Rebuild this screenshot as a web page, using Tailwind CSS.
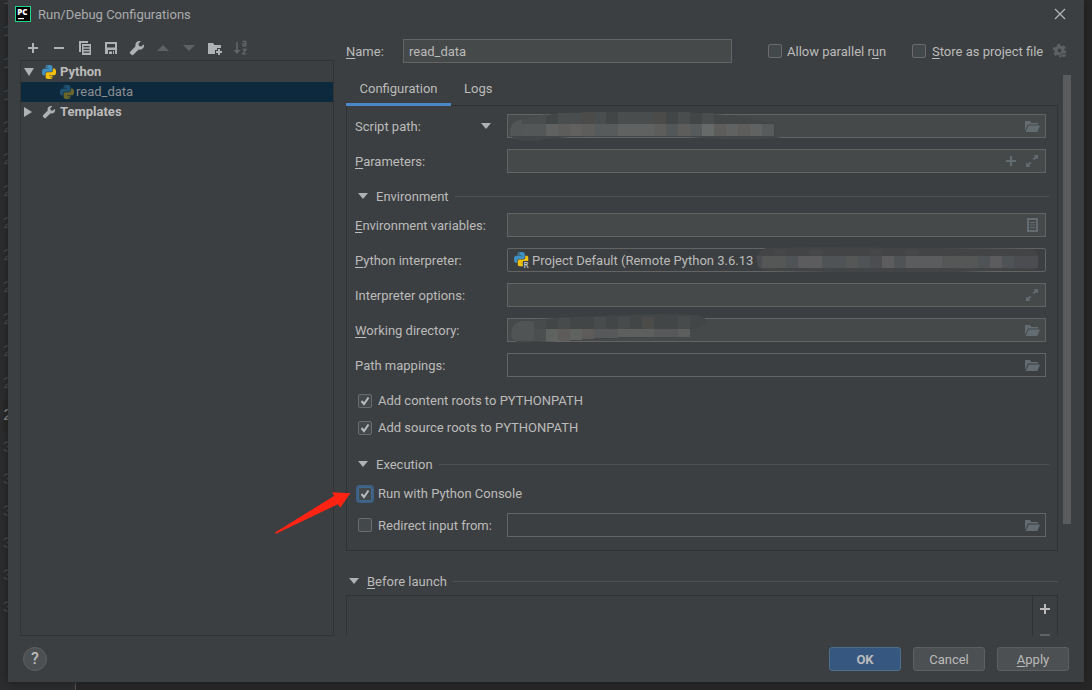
<!DOCTYPE html>
<html lang="en">
<head>
<meta charset="utf-8">
<meta name="viewport" content="width=device-width, initial-scale=1">
<title>Run/Debug Configurations</title>
<script src="https://cdn.jsdelivr.net/npm/@tailwindcss/browser@4"></script>
</head>
<body class="relative flex min-h-screen flex-col overflow-hidden bg-[#272727] font-[Roboto,'Open_Sans',sans-serif] text-[13px] leading-5 text-[#bbbbbb]">

<!-- Shared icons -->
<svg class="hidden" aria-hidden="true">
  <symbol id="python" viewBox="0 0 24 24">
    <path fill="#3f8fc0" d="M14.25.18l.9.2.73.26.59.3.45.32.34.34.25.34.16.33.1.3.04.26.02.2-.01.13V8.5l-.05.63-.13.55-.21.46-.26.38-.3.31-.33.25-.35.19-.35.14-.33.1-.3.07-.26.04-.21.02H8.77l-.69.05-.59.14-.5.22-.41.27-.33.32-.27.35-.2.36-.15.37-.1.35-.07.32-.04.27-.02.21v3.06H3.17l-.21-.03-.28-.07-.32-.12-.35-.18-.36-.26-.36-.36-.35-.46-.32-.59-.28-.73-.21-.88-.14-1.05-.05-1.23.06-1.22.16-1.04.24-.87.32-.71.36-.57.4-.44.42-.33.42-.24.4-.16.36-.1.32-.05.24-.01h.16l.06.01h8.16v-.83H6.18l-.01-2.75-.02-.37.05-.34.11-.31.17-.28.25-.26.31-.23.38-.2.44-.18.51-.15.58-.12.64-.1.71-.06.77-.04.84-.02 1.27.05zm-6.3 1.98l-.23.33-.08.41.08.41.23.34.33.22.41.09.41-.09.33-.22.23-.34.08-.41-.08-.41-.23-.33-.33-.22-.41-.09-.41.09z"/>
    <path fill="#f2c10f" d="M21.1 6.11l.28.06.32.12.35.18.36.27.36.35.35.47.32.59.28.73.21.88.14 1.04.05 1.23-.06 1.23-.16 1.04-.24.86-.32.71-.36.57-.4.45-.42.33-.42.24-.4.16-.36.09-.32.05-.24.02-.16-.01h-8.22v.82h5.84l.01 2.76.02.36-.05.34-.11.31-.17.29-.25.25-.31.24-.38.2-.44.17-.51.15-.58.13-.64.09-.71.07-.77.04-.84.01-1.27-.04-1.07-.14-.9-.2-.73-.25-.59-.3-.45-.33-.34-.34-.25-.34-.16-.33-.1-.3-.04-.25-.02-.2.01-.13v-5.34l.05-.64.13-.54.21-.46.26-.38.3-.32.33-.24.35-.2.35-.14.33-.1.3-.06.26-.04.21-.02.13-.01h5.84l.69-.05.59-.14.5-.21.41-.28.33-.32.27-.35.2-.36.15-.36.1-.35.07-.32.04-.28.02-.21V6.07h2.09l.14.01zm-6.47 14.25l-.23.33-.08.41.08.41.23.33.33.23.41.08.41-.08.33-.23.23-.33.08-.41-.08-.41-.23-.33-.33-.23-.41-.08-.41.08z"/>
  </symbol>
  <symbol id="wrench" viewBox="0 0 16 16">
    <path fill="#afb1b3" d="M14.7 4.2 12.3 6.600 10 6 9.400 3.700 11.800 1.300C10.300.700 8.600 1.100 7.500 2.200 6.400 3.300 6.100 4.900 6.600 6.300L1.200 11.700C.7 12.200.7 13 1.200 13.500L2.500 14.800C3 15.300 3.800 15.300 4.300 14.800L9.700 9.400C11.100 9.900 12.700 9.600 13.800 8.500 14.900 7.400 15.300 5.700 14.700 4.200Z"/>
  </symbol>
  <symbol id="plus" viewBox="0 0 16 16"><path d="M7 3h2v4h4v2H9v4H7V9H3V7h4z" fill="currentColor"/></symbol>
  <symbol id="folder" viewBox="0 0 16 16">
    <path fill="#636c71" d="M1 3h5l1.500 2H14v1.500H4L1.500 12H1z"/>
    <path fill="#636c71" d="M4.600 7.500H16L13.300 14H1.600z"/>
  </symbol>
  <symbol id="expand" viewBox="0 0 16 16">
    <path fill="#636c71" d="M9.500 2H14v4.500L12.500 5 10.200 7.300 8.700 5.800 11 3.500zM2 9.500 3.500 11 5.800 8.700 7.300 10.200 5 12.500 6.500 14H2z"/>
  </symbol>
  <symbol id="caret" viewBox="0 0 10 6"><path d="M0 0h10L5 6z" fill="#afb1b3"/></symbol>
  <symbol id="tick" viewBox="0 0 14 14"><path d="M3.500 7 6 10 10.500 3.500" fill="none" stroke="#b9bbbd" stroke-width="2"/></symbol>
</svg>

<!-- Editor behind the dialog -->
<div class="absolute inset-0 flex" aria-hidden="true">
  <div class="w-[76px] overflow-hidden border-r border-[#555555] bg-[#2b2d2e]">
    <ol class="-mt-4 pl-[3px] font-['Liberation_Mono',monospace] text-base leading-8 text-[#505355]">
      <li>16</li><li>17</li><li>18</li><li>19</li><li>20</li><li>21</li><li>22</li><li>23</li><li>24</li><li>25</li><li>26</li><li>27</li><li>28</li><li class="bg-[#292929] text-[#a4a3a3]">29</li><li>30</li><li>31</li><li>32</li><li>33</li><li>34</li><li>35</li>
    </ol>
  </div>
</div>

<!-- Dialog -->
<main class="relative mx-2 mb-2 flex flex-1 flex-col bg-[#3c3f41] shadow-[0_0_8px_#1c1c1c]">
  <header class="flex h-7 items-center pr-[18px] pl-[7px]">
    <svg class="size-4" viewBox="0 0 16 16" role="img" aria-label="PyCharm">
      <rect x=".5" y=".5" width="15" height="15" fill="#000" stroke="#21d789"/>
      <text x="2.200" y="9" font-family="Open Sans, sans-serif" font-weight="800" font-size="8" fill="#fff">PC</text>
      <path d="M3 12h6v1.200H3z" fill="#fff"/>
    </svg>
    <h1 class="ml-[7px] flex-1 leading-[21px] text-[#a9abad]">Run/Debug Configurations</h1>
    <button type="button" aria-label="Close" class="size-3"><svg class="size-3" viewBox="0 0 12 12"><path d="M1 1l10 10M11 1 1 11" stroke="#b4b6b8" stroke-width="1.200"/></svg></button>
  </header>

  <div class="flex flex-1">
    <!-- Configuration tree -->
    <aside class="ml-3 flex w-[314px] flex-col pt-2">
      <div class="flex h-6 items-center gap-[10px] pl-[5px] text-[#afb1b3]">
        <button type="button" aria-label="Add" class="size-4"><svg class="size-4"><use href="#plus"/></svg></button>
        <button type="button" aria-label="Remove" class="size-4"><svg class="size-4" viewBox="0 0 16 16"><path d="M3 7h10v2H3z" fill="currentColor"/></svg></button>
        <button type="button" aria-label="Copy" class="size-4"><svg class="size-4" viewBox="0 0 16 16" fill="currentColor"><path d="M2 1h9v2H4v9H2z"/><path fill-rule="evenodd" d="M5 4h9v11H5zM6.500 6v1.200h6V6zM6.500 8.800V10h6V8.800zM6.500 11.500v1.200h6v-1.200z"/></svg></button>
        <button type="button" aria-label="Save" class="size-4"><svg class="size-4" viewBox="0 0 16 16" fill="currentColor"><path fill-rule="evenodd" d="M2 2h12v12h-2v-4H5v4H2zM4 4v3.500h8V4z"/><path d="M6 11.500h3V14H6zM10 11h1v3h-1z"/></svg></button>
        <button type="button" aria-label="Edit templates" class="size-4"><svg class="size-4"><use href="#wrench"/></svg></button>
        <button type="button" aria-label="Move up" class="size-4" disabled><svg class="size-4" viewBox="0 0 16 16"><path d="M2 11h12L8 5z" fill="#5f6162"/></svg></button>
        <button type="button" aria-label="Move down" class="size-4" disabled><svg class="size-4" viewBox="0 0 16 16"><path d="M2 5h12l-6 6z" fill="#5f6162"/></svg></button>
        <button type="button" aria-label="New folder" class="size-4"><svg class="size-4" viewBox="0 0 16 16" fill="currentColor"><path d="M1 3h5l1.500 2H14v3h-4v2H8v4H1z"/><path d="M11 9h2v2h2v2h-2v2h-2v-2H9v-2h2z"/></svg></button>
        <button type="button" aria-label="Sort" class="size-4" disabled><svg class="size-4" viewBox="0 0 16 16" fill="none" stroke="#636567" stroke-width="1.500"><path d="M4 2v9"/><path d="M.5 10h7L4 14z" fill="#636567" stroke="none"/><path d="M9.500 1.500h3.300V6.500M12.500 3.800H10V5.900h2.500M9.500 9.500h3.500L9.700 13.800h3.700" stroke-width="1.300"/></svg></button>
      </div>
      <ul class="flex-1 border border-[#323232] pt-px" role="tree" aria-label="Configurations">
        <li class="flex h-5 items-center pl-[3px] font-bold" role="treeitem">
          <svg class="h-2 w-[10px]" viewBox="0 0 10 8"><path d="M0 0h10L5 8z" fill="#afb1b3"/></svg>
          <svg class="mr-1 ml-2 size-[14px]"><use href="#python"/></svg>Python
        </li>
        <li class="flex h-5 items-center bg-[#0d293e] pl-[39px] text-[#8c8e90]" role="treeitem" aria-selected="true">
          <svg class="mr-[2px] size-[14px] opacity-40"><use href="#python"/></svg>read_data
        </li>
        <li class="flex h-5 items-center pl-[3px] font-bold" role="treeitem">
          <svg class="h-[10px] w-[10px]" viewBox="0 0 10 10"><path d="M0 0l8 5-8 5z" fill="#afb1b3"/></svg>
          <svg class="mr-1 ml-2 size-[14px]"><use href="#wrench"/></svg>Templates
        </li>
      </ul>
    </aside>

    <!-- Configuration editor -->
    <section class="ml-3 flex flex-1 flex-col pt-[11px] pr-[13px] leading-[21px]">
      <div class="flex h-6 items-center">
        <label for="name" class="w-[57px]"><u class="underline-offset-2">N</u>ame:</label>
        <input id="name" value="read_data" class="h-6 w-[329px] border border-[#646464] bg-[#45494a] px-[5px] outline-none">
        <span class="flex flex-1 items-center justify-end pr-[3px]">
          <input id="parallel" type="checkbox" class="mr-[5px] size-[14px] appearance-none rounded-xs border border-[#6b6b6b] bg-[#43494a]">
          <label for="parallel" class="w-[125px]">Allow parallel r<u class="underline-offset-2">u</u>n</label>
          <input id="store" type="checkbox" class="mr-[6px] size-[14px] appearance-none rounded-xs border border-[#6b6b6b] bg-[#43494a]">
          <label for="store" class="w-[120px]"><u class="underline-offset-2">S</u>tore as project file</label>
          <button type="button" aria-label="Storage options" class="size-4"><svg class="size-4" viewBox="0 0 16 16"><circle cx="7.500" cy="7.500" r="3.500" fill="none" stroke="#5f6264" stroke-width="3"/><circle cx="7.500" cy="7.500" r="5.700" fill="none" stroke="#5f6264" stroke-width="2" stroke-dasharray="3 2.970"/><path d="M8.500 11h7l-3.500 4z" fill="#5f6264" stroke="#3c3f41" stroke-width=".7"/></svg></button>
        </span>
      </div>

      <div class="flex flex-1">
        <div class="flex flex-1 flex-col">
          <div class="relative z-10 mt-[10px] -mb-px flex h-[33px]" role="tablist">
            <button type="button" role="tab" aria-selected="true" class="w-[105px] border-b-3 border-[#4a88c7]">Configuration</button>
            <button type="button" role="tab" class="border-b-3 border-transparent px-[13px]">Logs</button>
          </div>

          <form class="border border-[#323232] px-2 pt-2 pb-[13px]">
            <div class="mr-[3px] flex flex-col gap-[11px]">
              <div class="flex h-6 items-center">
                <span class="flex w-[152px] items-center">
                  <select aria-label="Target kind" class="w-[126px] appearance-none outline-none"><option>Script path:</option><option>Module name:</option></select>
                  <svg class="h-[6px] w-[10px]"><use href="#caret"/></svg>
                </span>
                <span class="relative flex h-6 flex-1 items-center border border-[#646464] bg-[#45494a] pr-[5px]">
                  <input aria-label="Script path" class="min-w-0 flex-1 outline-none">
                  <button type="button" aria-label="Browse" class="size-4"><svg class="size-4"><use href="#folder"/></svg></button>
                  <svg class="absolute -top-[5px] -left-px h-8 w-[280px]" viewBox="0 0 280 32" aria-hidden="true">
                    <path fill="#434647" d="M3 20Q4 11 20 8 50 2 80 2H180L230 6 268 14V27H274Q265 30 215 29L180 27Q120 26 75 26L40 29Q20 33 6 29z"/>
                    <path fill="#525657" d="M3 26V20Q4 11 16 9V26z"/>
                    <path fill="#4a4d4d" d="M15 9 39 4V14H15zM51 3h24v11H51zM87 2h12v12H87zM111 2h36v12h-36zM171 2h12v12h-12zM195 3h12v11h-12z"/>
                    <path fill="#4b4b49" d="M75 2h12v12H75zM147 2h12v12h-12z"/>
                    <path fill="#535758" d="M15 14h24v12H15zM159 14h12v12h-12z"/>
                    <path fill="#606261" d="M39 14h12v12H39zM111 14h24v12h-24zM135 14h12v12h-12zM219 14h12v12h-12zM243 14h12v12h-12z"/>
                    <path fill="#5d5d5c" d="M51 14h12v12H51zM75 14h12v12H75zM147 14h12v12h-12zM171 14h12v12h-12zM207 14h12v12h-12zM231 14h12v12h-12z"/>
                    <path fill="#62605e" d="M63 14h12v12H63z"/>
                    <path fill="#585b5c" d="M87 14h24v12H87zM183 14h12v12h-12zM255 14h12v12h-12z"/>
                    <path fill="#666a68" d="M195 14h12v12h-12z"/>
                  </svg>
                </span>
              </div>
              <div class="flex h-6 items-center">
                <label for="params" class="w-[152px]"><u class="underline-offset-2">P</u>arameters:</label>
                <span class="flex h-6 flex-1 items-center gap-[5px] border border-[#646464] bg-[#45494a] pr-[5px] text-[#636c71]">
                  <input id="params" class="min-w-0 flex-1 outline-none">
                  <button type="button" aria-label="Insert macro" class="size-4"><svg class="size-4"><use href="#plus"/></svg></button>
                  <button type="button" aria-label="Expand" class="size-4"><svg class="size-4"><use href="#expand"/></svg></button>
                </span>
              </div>
            </div>

            <h2 class="flex h-10 items-center pt-[6px] pl-[3px]">
              <svg class="mr-2 h-[6px] w-[10px]"><use href="#caret"/></svg>Environment
              <span class="ml-[6px] h-px flex-1 bg-[#515151]"></span>
            </h2>

            <div class="mr-[3px] flex flex-col gap-[11px]">
              <div class="flex h-6 items-center">
                <label for="env" class="w-[152px]"><u class="underline-offset-2">E</u>nvironment variables:</label>
                <span class="flex h-6 flex-1 items-center border border-[#646464] bg-[#45494a] pr-[5px]">
                  <input id="env" class="min-w-0 flex-1 outline-none">
                  <button type="button" aria-label="Edit variables" class="size-4"><svg class="size-4" viewBox="0 0 16 16"><path d="M4 2h9v12H4z" fill="none" stroke="#636c71" stroke-width="2"/><path d="M6 5.500h5M6 8h5M6 10.500h5" stroke="#636c71"/></svg></button>
                </span>
              </div>
              <div class="flex h-6 items-center">
                <label for="interp" class="w-[152px]"><u class="underline-offset-2">P</u>ython interpreter:</label>
                <span class="relative flex h-6 flex-1 items-center rounded-xs border border-[#646464] pl-[6px]">
                  <svg class="mr-[2px] size-4 overflow-visible" viewBox="0 0 16 16"><use href="#python" width="14.500" height="14.500"/><path d="M9 9h7v7H9z" fill="#3c3f41"/><text x="9.500" y="16" font-family="Open Sans, sans-serif" font-weight="600" font-size="8" fill="#c4c6c8">R</text></svg>
                  <select id="interp" class="min-w-0 flex-1 appearance-none outline-none"><option>Project Default (Remote Python 3.6.13</option></select>
                  <svg class="absolute -top-[3px] left-[248px] h-7 w-[284px]" viewBox="0 0 284 28" aria-hidden="true">
                    <path fill="#424445" d="M0 15Q1 4 10 2L60 1 180 2 276 3Q283 5 283 14 282 24 276 24L200 26 80 26 10 25Q1 24 0 15z"/>
                    <path fill="#464748" d="M18 3h12v7H18zM54 3h12v7H54zM114 3h12v7h-12zM150 3h12v7h-12z"/>
                    <path fill="#4b4d50" d="M0 10h6v12H3zM114 10h12v12h-12zM258 10h12v12h-12zM270 10h12v12h-12z"/>
                    <path fill="#555656" d="M6 10h24v12H6zM90 10h12v12H90zM186 10h24v12h-24zM210 10h12v12h-12z"/>
                    <path fill="#505355" d="M30 10h12v12H30zM66 10h24v12H66zM102 10h12v12h-12zM138 10h12v12h-12zM222 10h12v12h-12zM246 10h12v12h-12z"/>
                    <path fill="#5c5c5e" d="M42 10h24v12H42zM126 10h12v12h-12zM234 10h12v12h-12z"/>
                    <path fill="#5a5c5e" d="M150 10h36v12h-36z"/>
                  </svg>
                </span>
              </div>
              <div class="flex h-6 items-center">
                <label for="opts" class="w-[152px]">Interpreter options:</label>
                <span class="flex h-6 flex-1 items-center border border-[#646464] bg-[#45494a] pr-[5px]">
                  <input id="opts" class="min-w-0 flex-1 outline-none">
                  <button type="button" aria-label="Expand" class="size-4"><svg class="size-4"><use href="#expand"/></svg></button>
                </span>
              </div>
              <div class="flex h-6 items-center">
                <label for="workdir" class="w-[152px]"><u class="underline-offset-2">W</u>orking directory:</label>
                <span class="relative flex h-6 flex-1 items-center border border-[#646464] bg-[#45494a] pr-[5px]">
                  <input id="workdir" class="min-w-0 flex-1 outline-none">
                  <button type="button" aria-label="Browse" class="size-4"><svg class="size-4"><use href="#folder"/></svg></button>
                  <svg class="absolute -top-[5px] -left-px h-8 w-[204px]" viewBox="0 0 204 32" aria-hidden="true">
                    <path fill="#434647" d="M4 19Q5 8 14 7L60 3 150 0 190 1Q199 3 200 8 195 14 183 15V23L120 24 50 27 14 29Q4 28 4 19z"/>
                    <path fill="#484b4b" d="M27 6h12v9H27zM51 4h12v11H51zM87 3h12v12H87zM111 3h12v12h-12zM171 3h12v12h-12z"/>
                    <path fill="#4b4b49" d="M135 3h12v12h-12z"/>
                    <path fill="#505455" d="M4 19Q5 8 15 7H27V27H8Q4 25 4 19z"/>
                    <path fill="#4c4f50" d="M27 15h12v12H27z"/>
                    <path fill="#606260" d="M39 15h12v12H39zM63 15h12v11H63z"/>
                    <path fill="#5e5c5b" d="M51 15h12v12H51zM75 15h12v10H75z"/>
                    <path fill="#565859" d="M87 15h24v9H87zM147 15h24v8h-24z"/>
                    <path fill="#5d5f5f" d="M111 15h36v8h-36zM171 15h12v8h-12z"/>
                  </svg>
                </span>
              </div>
              <div class="flex h-6 items-center">
                <label for="mappings" class="w-[152px]">Path mappings:</label>
                <span class="flex h-6 flex-1 items-center border border-[#646464] pr-[5px]">
                  <input id="mappings" class="min-w-0 flex-1 outline-none">
                  <button type="button" aria-label="Browse" class="size-4"><svg class="size-4"><use href="#folder"/></svg></button>
                </span>
              </div>
            </div>

            <div class="mt-[10px] flex h-[27px] items-center pl-[3px]">
              <span class="relative mr-[6px] size-[14px]">
                <input id="content" type="checkbox" checked class="peer block size-[14px] appearance-none rounded-xs border border-[#6b6b6b] bg-[#43494a]">
                <svg class="pointer-events-none absolute inset-0 hidden size-[14px] peer-checked:block"><use href="#tick"/></svg>
              </span>
              <label for="content">Add content roots to PYTHONPATH</label>
            </div>
            <div class="flex h-[27px] items-center pl-[3px]">
              <span class="relative mr-[6px] size-[14px]">
                <input id="source" type="checkbox" checked class="peer block size-[14px] appearance-none rounded-xs border border-[#6b6b6b] bg-[#43494a]">
                <svg class="pointer-events-none absolute inset-0 hidden size-[14px] peer-checked:block"><use href="#tick"/></svg>
              </span>
              <label for="source">Add source roots to PYTHONPATH</label>
            </div>

            <h2 class="flex h-[42px] items-center pt-1 pl-[3px]">
              <svg class="mr-2 h-[6px] w-[10px]"><use href="#caret"/></svg>Execution
              <span class="ml-[6px] h-px flex-1 bg-[#515151]"></span>
            </h2>

            <div class="relative flex h-[21px] items-center pl-[3px]">
              <span class="relative mr-[6px] size-[14px]">
                <input id="console" type="checkbox" checked class="peer block size-[14px] appearance-none rounded-xs border border-[#43698e] bg-[#43494a] ring-2 ring-[#3d6185]">
                <svg class="pointer-events-none absolute inset-0 hidden size-[14px] peer-checked:block"><use href="#tick"/></svg>
              </span>
              <label for="console">Run with Python Console</label>
              <svg class="absolute top-2 -left-[81px] h-[44px] w-[77px]" viewBox="0 0 77 44" aria-hidden="true"><path d="M1 41.500 60 5 58.300 1.300 76.300 2.300 66.300 16.700 63.700 13.300 2 42.700z" fill="#ff2314"/></svg>
            </div>
            <div class="mt-[9px] mr-[3px] flex h-6 items-center pl-[3px]">
              <input id="redirect" type="checkbox" class="mr-[6px] size-[14px] appearance-none rounded-xs border border-[#6b6b6b] bg-[#43494a]">
              <label for="redirect" class="w-[129px]">Redirect input from:</label>
              <span class="flex h-6 flex-1 items-center border border-[#646464] pr-[5px]">
                <input aria-label="Input file" class="min-w-0 flex-1 outline-none">
                <button type="button" aria-label="Browse" class="size-4"><svg class="size-4"><use href="#folder"/></svg></button>
              </span>
            </div>
          </form>

          <h2 class="mt-[18px] mb-[2px] flex h-6 items-center pl-[3px]">
            <svg class="mr-2 h-[6px] w-[10px]"><use href="#caret"/></svg><span><u class="underline-offset-2">B</u>efore launch</span>
            <span class="ml-[6px] h-px flex-1 bg-[#515151]"></span>
          </h2>
          <div class="flex max-h-[41px] min-h-[41px] flex-1 justify-end overflow-hidden border border-b-0 border-[#323232]">
            <div class="flex w-[25px] flex-col items-center gap-[10px] border-l border-[#323232] pt-[5px]">
              <button type="button" aria-label="Add task" class="size-4"><svg class="size-4"><use href="#plus"/></svg></button>
              <button type="button" aria-label="Remove task" class="size-4" disabled><svg class="size-4" viewBox="0 0 16 16"><path d="M3 7h10v2H3z" fill="#5f6162"/></svg></button>
            </div>
          </div>
        </div>
        <div class="mt-3 ml-[5px] w-2"><div class="h-4/5 bg-[#595b5d]"></div></div>
      </div>
    </section>
  </div>

  <footer class="my-[11px] flex h-6 items-center gap-3 pr-[15px] pl-[15px] leading-[21px]">
    <button type="button" aria-label="Help" class="mr-auto size-6 rounded-full border border-[#5e6060] bg-[#4c5052] text-base leading-5 font-medium">?</button>
    <button type="button" class="h-6 w-[72px] rounded-[3px] border border-[#4c708c] bg-[#365880] font-bold">OK</button>
    <button type="button" class="h-6 w-[72px] rounded-[3px] border border-[#5e6060] bg-[#4c5052]">Cancel</button>
    <button type="button" class="h-6 w-[72px] rounded-[3px] border border-[#5e6060] bg-[#4c5052]"><u class="underline-offset-2">A</u>pply</button>
  </footer>
</main>
</body>
</html>
